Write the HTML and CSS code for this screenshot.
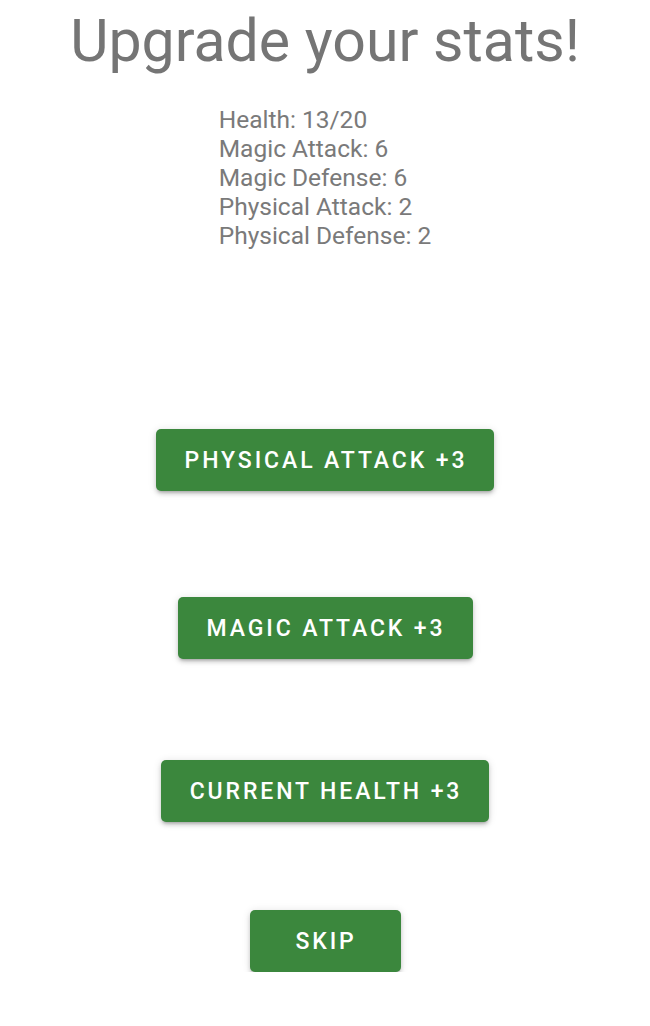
FILE: index.html
```html
<!DOCTYPE html>
<html>
<head>
<meta charset="utf-8">
<link rel="stylesheet" href="styles.css">
</head>
<body>
<div class="page">
  <h1 class="title">Upgrade your stats!</h1>
  <div class="stats">
    <div>Health: 13/20</div>
    <div>Magic Attack: 6</div>
    <div>Magic Defense: 6</div>
    <div>Physical Attack: 2</div>
    <div>Physical Defense: 2</div>
  </div>
  <button class="btn b1">Physical Attack +3</button>
  <button class="btn b2">Magic Attack +3</button>
  <button class="btn b3">Current Health +3</button>
  <button class="btn b4 skip">Skip</button>
</div>
</body>
</html>
```

FILE: styles.css
```css
html, body {
  margin: 0;
  padding: 0;
  background: #ffffff;
}
.page {
  display: flex;
  flex-direction: column;
  align-items: center;
  font-family: Roboto, "Noto Sans", sans-serif;
  width: 650px;
}
.title {
  margin: 6px 0 0 0;
  font-size: 59px;
  font-weight: 400;
  color: #757575;
  line-height: 69px;
}
.stats {
  margin-top: 30px;
  font-size: 24.5px;
  line-height: 29px;
  color: #7a7a7a;
}
.btn {
  font-family: Roboto, "Noto Sans", sans-serif;
  background: #3b873d;
  color: #ffffff;
  border: none;
  border-radius: 5px;
  text-transform: uppercase;
  font-size: 23px;
  font-weight: 500;
  letter-spacing: 2.9px;
  height: 62px;
  padding: 0 27px 0 29px;
  box-shadow: 0 3px 3px -2px rgba(0,0,0,0.2), 0 3px 4px 0 rgba(0,0,0,0.14), 0 1px 8px 0 rgba(0,0,0,0.12);
}
.b1 { margin-top: 179px; }
.b2 { margin-top: 106px; }
.b3 { margin-top: 101px; }
.b4 { margin-top: 88px; }
.skip { min-width: 151px; }
```
